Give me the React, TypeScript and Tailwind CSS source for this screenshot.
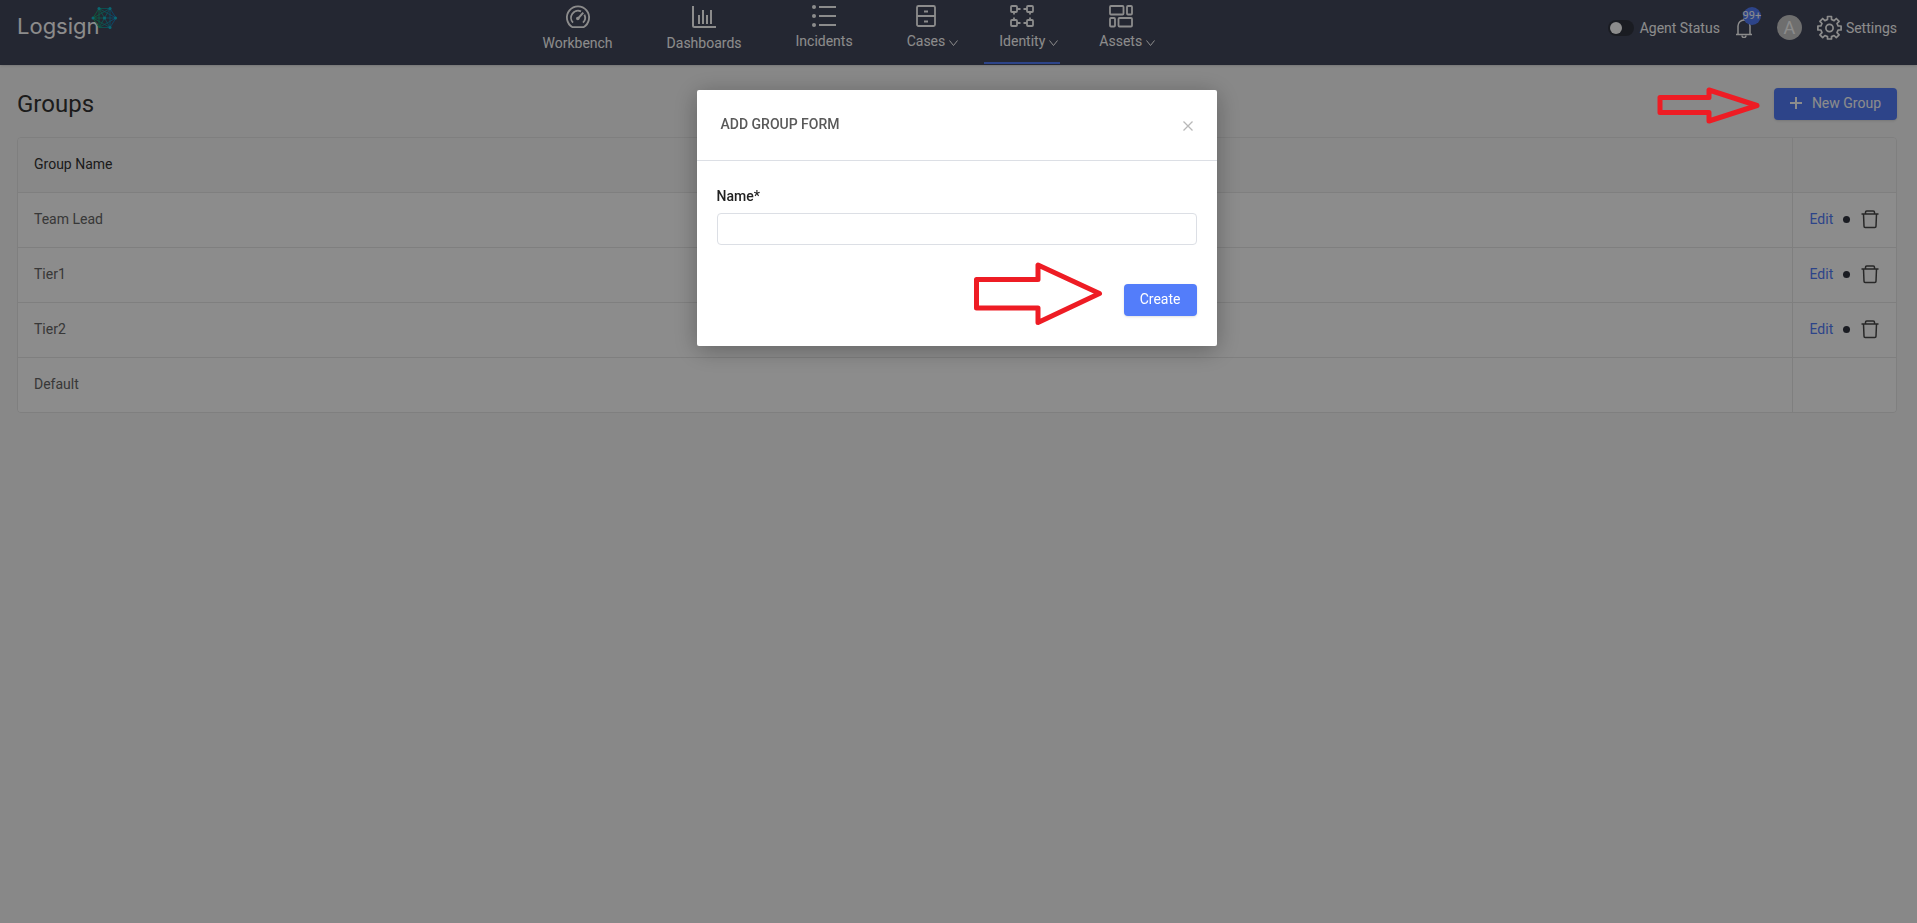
import { useState } from 'react';
import type { ReactNode } from 'react';

interface NavItem {
  label: string;
  icon: ReactNode;
  hasMenu?: boolean;
  active?: boolean;
}

interface Group {
  id: number;
  name: string;
  locked?: boolean;
}

const GROUPS: Group[] = [
  { id: 1, name: 'Team Lead' },
  { id: 2, name: 'Tier1' },
  { id: 3, name: 'Tier2' },
  { id: 4, name: 'Default', locked: true },
];

const NAV_ITEMS: NavItem[] = [
  {
    label: 'Workbench',
    icon: (
      <svg width="26" height="26" viewBox="0 0 26 26" fill="none" stroke="currentColor" strokeWidth="1.8">
        <path d="M7.5 23.2a11.1 11.1 0 1 1 11 0z" strokeLinejoin="round" />
        <path d="M8 18.6a7 7 0 0 1 8-11.2M19.4 10.6a7 7 0 0 1-1.4 8" />
        <path d="M13 14.5 18.3 8.6" strokeWidth="2" />
        <circle cx="12.8" cy="14.5" r="1.8" fill="currentColor" stroke="none" />
      </svg>
    ),
  },
  {
    label: 'Dashboards',
    icon: (
      <svg width="26" height="26" viewBox="0 0 26 26" fill="none" stroke="currentColor" strokeWidth="2">
        <path d="M2 2v19.5Q2 23 3.5 23H25" />
        <path d="M8 20v-9M12 20V6M16 20v-9M20 20V6" />
      </svg>
    ),
  },
  {
    label: 'Incidents',
    icon: (
      <svg width="26" height="24" viewBox="0 0 26 24" fill="none" stroke="currentColor" strokeWidth="2">
        <path d="M8 3h17M8 12h17M8 21h17" />
        <g fill="currentColor" stroke="none">
          <circle cx="3" cy="3" r="2" />
          <circle cx="3" cy="12" r="2" />
          <circle cx="3" cy="21" r="2" />
        </g>
      </svg>
    ),
  },
  {
    label: 'Cases',
    hasMenu: true,
    icon: (
      <svg width="26" height="24" viewBox="0 0 26 24" fill="none" stroke="currentColor" strokeWidth="1.8">
        <rect x="4" y="2" width="18" height="20" rx="1.5" />
        <path d="M4 12h18M11 7.5h4M11 17.5h4" />
      </svg>
    ),
  },
  {
    label: 'Identity',
    hasMenu: true,
    active: true,
    icon: (
      <svg width="26" height="24" viewBox="0 0 26 24" fill="none" stroke="currentColor" strokeWidth="1.8">
        <rect x="2" y="2" width="6" height="6" rx="1" />
        <rect x="18" y="2" width="6" height="6" rx="1" />
        <rect x="2" y="16" width="6" height="6" rx="1" />
        <rect x="18" y="16" width="6" height="6" rx="1" />
        <path d="M8 5h3.5M14.5 5H18M8 19h3.5M14.5 19H18M5 8v2.5M5 13.5V16M21 8v2.5M21 13.5V16" />
      </svg>
    ),
  },
  {
    label: 'Assets',
    hasMenu: true,
    icon: (
      <svg width="26" height="24" viewBox="0 0 26 24" fill="none" stroke="currentColor" strokeWidth="1.8">
        <rect x="2" y="2" width="13.5" height="8.5" rx="1" />
        <rect x="19" y="2" width="5" height="8.5" rx="1" />
        <rect x="2" y="14" width="5" height="8.5" rx="1" />
        <rect x="10.5" y="14" width="13.5" height="8.5" rx="1" />
      </svg>
    ),
  },
];

function Logo() {
  return (
    <a href="#" className="relative flex w-[100px] shrink-0 pt-2.5 text-white">
      <span className="font-[Inter,sans-serif] text-[22px] leading-8">Logsign</span>
      <svg className="absolute right-0 top-1.5" width="26" height="24" viewBox="0 0 26 24" fill="none">
        <defs>
          <linearGradient id="mesh" x1="1" y1="12" x2="25" y2="12" gradientUnits="userSpaceOnUse">
            <stop offset="0" stopColor="#12c45c" />
            <stop offset="1" stopColor="#0d84e0" />
          </linearGradient>
        </defs>
        <path
          d="M8 2.5h11l6 9.5-6 9.5H8L2 12zM8 2.5l11 19M19 2.5l-11 19M2 12h23M8 2.5 25 12M19 2.5 2 12M8 21.5 25 12M19 21.5 2 12M8 2.5v19M19 2.5v19"
          stroke="url(#mesh)"
          strokeWidth="0.8"
        />
        <g fill="#12bcd0">
          <circle cx="8" cy="2.5" r="1.5" />
          <circle cx="19" cy="2.5" r="1.5" />
          <circle cx="2" cy="12" r="1.5" />
          <circle cx="13.5" cy="12" r="1.5" />
          <circle cx="24.5" cy="12" r="1.5" />
          <circle cx="19" cy="21.5" r="1.5" />
        </g>
      </svg>
    </a>
  );
}

function NavLink({ label, icon, hasMenu, active }: NavItem) {
  return (
    <a
      href="#"
      className={`flex h-16 flex-col items-center gap-[3px] border-b-2 px-[15px] pt-1 ${active ? 'border-[#537dfa]' : 'border-transparent'}`}
    >
      {icon}
      <span className="relative text-sm leading-5">
        {label}
        {hasMenu && (
          <svg className="absolute left-full top-2 ml-1" width="9" height="8" viewBox="0 0 9 8" fill="none" stroke="currentColor">
            <path d="m.5 1.5 4 5 4-5" />
          </svg>
        )}
      </span>
    </a>
  );
}

function TopBar() {
  const [online, setOnline] = useState(false);

  return (
    <header className="flex h-[65px] items-start bg-[#43475b] pl-[17px] pr-5 text-white shadow-sm">
      <Logo />
      <nav className="mr-10 flex flex-1 justify-center gap-6">
        {NAV_ITEMS.map(item => (
          <NavLink key={item.label} {...item} />
        ))}
      </nav>

      <div className="flex h-[55px] items-center text-sm">
        <label className="flex items-center gap-1.5">
          <input
            type="checkbox"
            role="switch"
            checked={online}
            onChange={e => setOnline(e.target.checked)}
            className="h-4 w-[26px] appearance-none rounded-full bg-[#30343f] p-0.5 before:block before:size-3 before:rounded-full before:bg-white checked:before:ml-auto"
          />
          Agent Status
        </label>
        <button aria-label="Notifications" className="relative ml-[15px]">
          <svg width="18" height="20" viewBox="0 0 18 20" fill="none" stroke="currentColor" strokeWidth="1.5">
            <path d="M1 16.5h16M3 16.5V8a6 6 0 0 1 12 0v8.5M9 2V.5" />
            <path d="M7 17.5a2 2 0 0 0 4 0" />
          </svg>
          <span className="absolute -top-[11px] left-2 flex size-[18px] items-center justify-center rounded-full bg-[#537dfa] text-[11px]">
            99+
          </span>
        </button>
        <span className="ml-6 flex size-[25px] items-center justify-center rounded-full bg-[#c8c8c8] text-lg">A</span>
        <a href="#" className="ml-[15px] flex items-center gap-1">
          <svg width="25" height="25" viewBox="0 0 25 25" fill="none" stroke="currentColor" strokeWidth="1.7" strokeLinejoin="round">
            <path d="M10.5 1.5h4v3l2.6 1.1 2.2-2.1 2.8 2.8-2.1 2.2 1.1 2.5h3v4h-3L20 17.6l2.1 2.2-2.8 2.8-2.2-2.1-2.6 1.1v2.4h-4v-2.4l-2.6-1.1-2.2 2.1-2.8-2.8L5 17.6 3.9 15h-3v-4h3L5 8.5 2.9 6.3l2.8-2.8 2.2 2.1 2.6-1.1z" />
            <circle cx="12.5" cy="13" r="3.6" />
          </svg>
          Settings
        </a>
      </div>
    </header>
  );
}

function TrashIcon() {
  return (
    <svg width="18" height="20" viewBox="0 0 18 20" fill="none" stroke="currentColor" strokeWidth="1.5">
      <path d="M.5 5h17M4.5 5V3.2Q4.5 2 5.7 2h6.6q1.2 0 1.2 1.2V5" />
      <path d="M2.5 5 3 17.3q0 1.2 1.2 1.2h9.6q1.2 0 1.2-1.2L15.5 5" />
    </svg>
  );
}

function GroupTable({ groups }: { groups: Group[] }) {
  return (
    <div className="mt-[17px] overflow-hidden rounded border border-[#e8e8e8]">
      <table className="w-full text-left text-sm">
        <thead>
          <tr className="h-[54px] bg-[#f8f8f8] text-[#333]">
            <th className="px-4 pb-0.5 font-normal">Group Name</th>
            <th className="w-[104px] border-l border-[#e8e8e8]" aria-label="Actions" />
          </tr>
        </thead>
        <tbody>
          {groups.map(group => (
            <tr key={group.id} className="h-[55px] border-t border-[#e8e8e8] bg-white text-[#666]">
              <td className="px-4 pb-0.5">{group.name}</td>
              <td className="border-l border-[#e8e8e8] pb-0.5 pl-[17px] pr-3">
                {!group.locked && (
                  <div className="flex items-center">
                    <a href="#" className="text-[#537dfa]">Edit</a>
                    <span className="ml-2.5 mt-0.5 size-[7px] rounded-full bg-[#30343f]" />
                    <button aria-label={`Delete ${group.name}`} className="ml-[11px] text-[#4a4a4a]">
                      <TrashIcon />
                    </button>
                  </div>
                )}
              </td>
            </tr>
          ))}
        </tbody>
      </table>
    </div>
  );
}

function AddGroupModal({ onClose }: { onClose: () => void }) {
  const [name, setName] = useState('');

  return (
    <div className="fixed inset-0 z-40 flex items-start justify-center bg-black/45 pr-1 pt-[90px]">
      <div role="dialog" aria-labelledby="add-group-title" className="w-[520px] rounded-xs bg-white shadow-[0_4px_24px_rgba(0,0,0,0.3)]">
        <div className="flex h-[71px] items-center justify-between border-b border-[#dcdfe5] px-6">
          <h2 id="add-group-title" className="pb-0.5 text-sm font-medium text-[#595959]">ADD GROUP FORM</h2>
          <button onClick={onClose} aria-label="Close" className="pt-0.5 text-[#b8b8b8]">
            <svg width="10" height="10" viewBox="0 0 10 10" stroke="currentColor" strokeWidth="1.3">
              <path d="m.5.5 9 9M9.5.5l-9 9" />
            </svg>
          </button>
        </div>
        <form className="px-5 pb-[30px] pt-[25px]" onSubmit={e => e.preventDefault()}>
          <label htmlFor="group-name" className="block text-sm leading-5 font-medium text-[#222]">Name*</label>
          <input
            id="group-name"
            value={name}
            onChange={e => setName(e.target.value)}
            className="mt-[7px] block h-8 w-full rounded border border-[#dcdfe5] px-3 text-sm outline-none"
          />
          <div className="mt-[39px] flex justify-end">
            <div className="relative">
              <svg
                className="absolute right-full top-1/2 mr-5 -translate-y-1/2"
                width="132"
                height="76"
                viewBox="0 0 132 76"
                fill="none"
                stroke="#ee1c24"
                strokeWidth="5"
                strokeLinejoin="round"
              >
                <path d="M4.5 17.5V46H66v14.500l61.500-29L66 3v14.500z" />
              </svg>
              <button type="submit" className="h-8 rounded bg-[#537dfa] px-4 pb-0.5 text-sm text-white shadow-sm">Create</button>
            </div>
          </div>
        </form>
      </div>
    </div>
  );
}

export default function App() {
  const [open, setOpen] = useState(true);

  return (
    <div className="min-h-screen bg-[#f8f8f8] font-[Roboto,sans-serif]">
      <TopBar />
      <main className="pb-8 pl-[17px] pr-5 pt-[23px]">
        <div className="flex items-center justify-between">
          <h1 className="text-2xl text-[#333]">Groups</h1>
          <div className="relative">
            <svg
              className="absolute right-full top-1/2 z-50 mr-3 -translate-y-1/2"
              width="106"
              height="40"
              viewBox="0 0 106 40"
              fill="none"
              stroke="#ee1c24"
              strokeWidth="5"
              strokeLinejoin="round"
            >
              <path d="M4 13.5v15h49V37l48-15.5L53 6v7.5z" />
            </svg>
            <button onClick={() => setOpen(true)} className="flex h-8 items-center gap-2.5 rounded bg-[#537dfa] px-4 pb-0.5 text-sm text-white shadow-sm">
              <svg width="12" height="12" viewBox="0 0 12 12" stroke="currentColor" strokeWidth="2">
                <path d="M6 0v12M0 6h12" />
              </svg>
              New Group
            </button>
          </div>
        </div>
        <GroupTable groups={GROUPS} />
      </main>
      {open && <AddGroupModal onClose={() => setOpen(false)} />}
    </div>
  );
}
